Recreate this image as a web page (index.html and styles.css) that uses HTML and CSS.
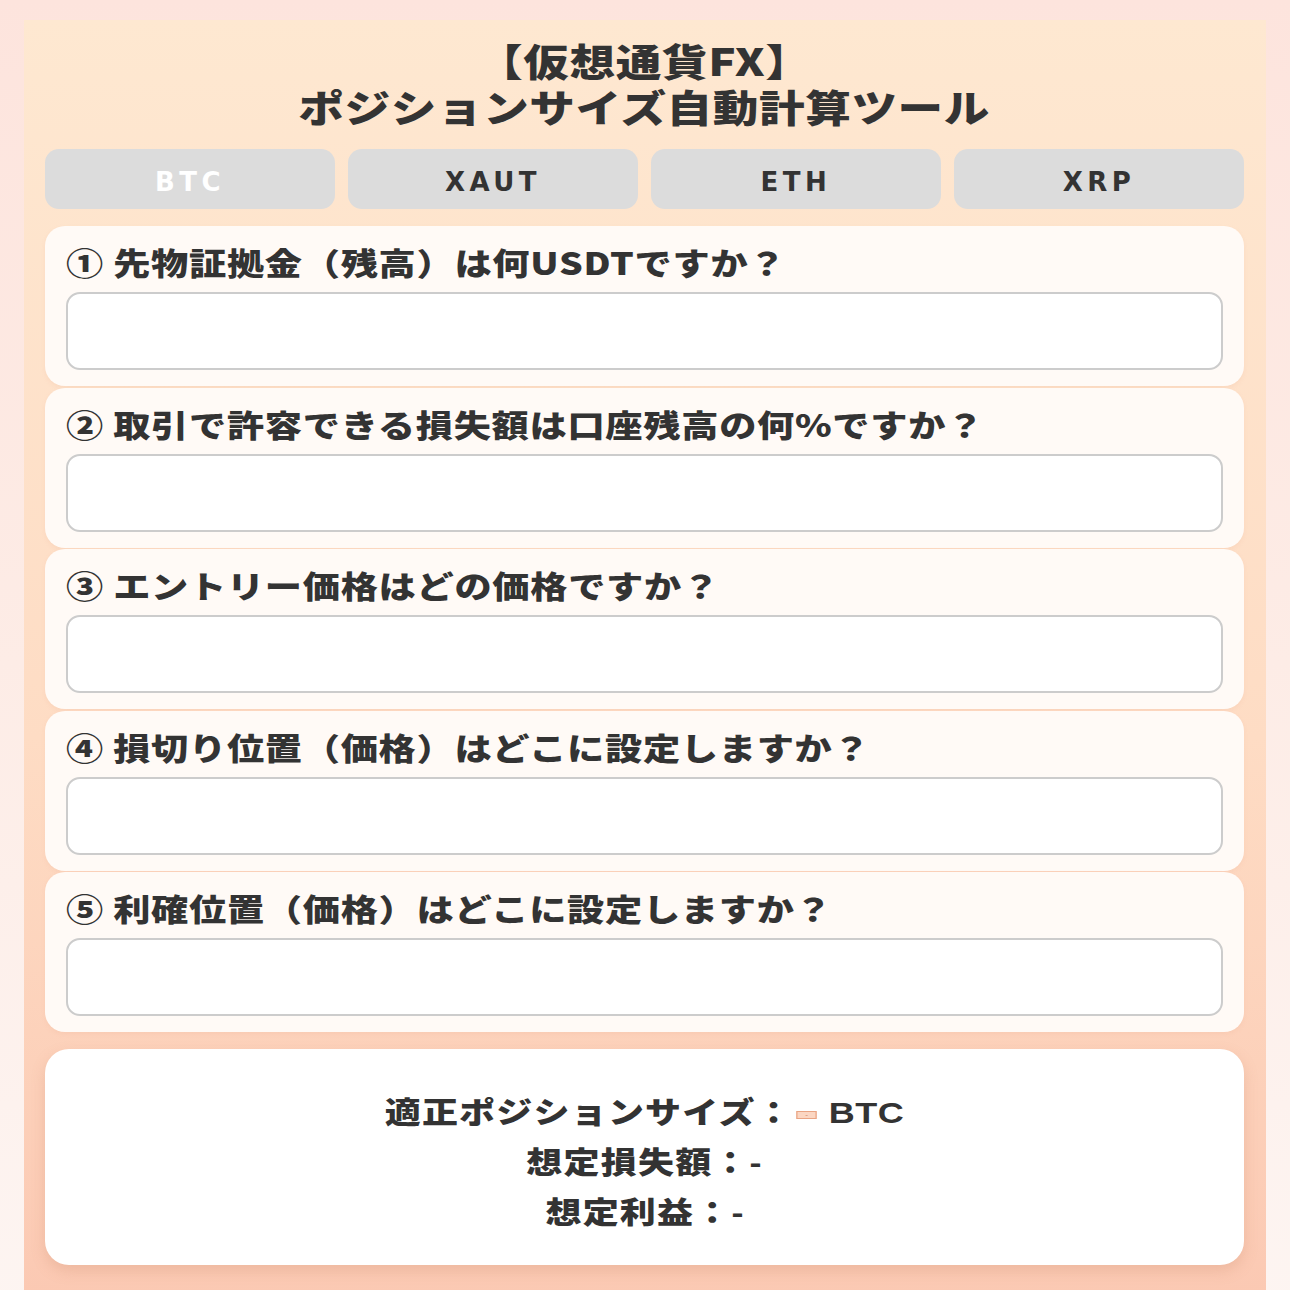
FILE: index.html
```html
<!DOCTYPE html>
<html lang="ja">
<head>
<meta charset="utf-8">
<title>ポジションサイズ自動計算ツール</title>
<link rel="stylesheet" href="styles.css">
</head>
<body>
<div class="app">
  <h1 class="title"><span class="title-line">【仮想通貨FX】</span><span class="title-line">ポジションサイズ自動計算ツール</span></h1>
  <div class="tabs">
    <button class="tab active">BTC</button>
    <button class="tab">XAUT</button>
    <button class="tab">ETH</button>
    <button class="tab">XRP</button>
  </div>
  <div class="questions">
    <div class="card">
      <label class="q">① 先物証拠金（残高）は何USDTですか？</label>
      <input class="field" type="text">
    </div>
    <div class="card">
      <label class="q">② 取引で許容できる損失額は口座残高の何%ですか？</label>
      <input class="field" type="text">
    </div>
    <div class="card">
      <label class="q">③ エントリー価格はどの価格ですか？</label>
      <input class="field" type="text">
    </div>
    <div class="card">
      <label class="q">④ 損切り位置（価格）はどこに設定しますか？</label>
      <input class="field" type="text">
    </div>
    <div class="card">
      <label class="q">⑤ 利確位置（価格）はどこに設定しますか？</label>
      <input class="field" type="text">
    </div>
  </div>
  <div class="result">
    <p class="line">適正ポジションサイズ：<span class="val">-</span> <span class="unit">BTC</span></p>
    <p class="line">想定損失額：<span class="unit">-</span></p>
    <p class="line">想定利益：<span class="unit">-</span></p>
  </div>
</div>
</body>
</html>
```
FILE: styles.css
```css
html, body {
  margin: 0;
  padding: 0;
}
body {
  background: linear-gradient(180deg, #fde4dd 0%, #fdece6 50%, #fdf5f2 100%);
  font-family: "Noto Sans CJK JP", "Noto Sans", sans-serif;
  color: #333;
  min-height: 1290px;
  overflow: hidden;
}
.app {
  width: 1242px;
  margin: 20px 0 0 24px;
  box-sizing: border-box;
  padding: 17px 22px 60px 21px;
  background: linear-gradient(180deg, #fee8d1 0%, #fedcc4 55%, #fbc8b2 100%);
  min-height: 1300px;
}
.title {
  margin: 0 0 20px;
  text-align: center;
  font-size: 38px;
  font-weight: 900;
  color: #333;
}
.title-line {
  display: block;
  width: max-content;
  margin: 0 auto;
  line-height: 46px;
  letter-spacing: 0.5px;
  transform: scaleX(1.2);
  transform-origin: center center;
}
.tabs {
  display: grid;
  grid-template-columns: repeat(4, 1fr);
  gap: 13px;
  margin-bottom: 17px;
}
.tab {
  height: 60px;
  border: none;
  border-radius: 14px;
  background: #dcdcdc;
  font-family: "DejaVu Sans", "Liberation Sans", sans-serif;
  font-weight: 700;
  font-size: 26px;
  letter-spacing: 4.5px;
  color: #333;
  padding: 5px 0 0;
}
.tab.active {
  color: #fff;
}
.questions {
  display: flex;
  flex-direction: column;
  gap: 1.5px;
}
.card {
  height: 160px;
  box-sizing: border-box;
  background: #fffaf6;
  border-radius: 20px;
  padding: 18px 21px 16px;
  display: flex;
  flex-direction: column;
  box-shadow: 0 2px 4px rgba(230, 170, 140, 0.15);
}
.q {
  display: block;
  width: max-content;
  font-size: 31px;
  line-height: 36px;
  font-weight: 900;
  letter-spacing: 0.6px;
  white-space: nowrap;
  margin-bottom: 12px;
  transform: scaleX(1.2);
  transform-origin: left center;
}
.field {
  height: 78px;
  box-sizing: border-box;
  border: 2px solid #cccccc;
  border-radius: 14px;
  background: #fff;
  width: 100%;
  font-size: 24px;
}
.result {
  margin-top: 17px;
  background: #fff;
  border-radius: 24px;
  padding: 36px 0 30px;
  text-align: center;
  box-shadow: 0 6px 14px rgba(200, 130, 100, 0.25);
}
.line {
  margin: 0 auto;
  width: max-content;
  height: 50px;
  font-size: 30px;
  line-height: 50px;
  font-weight: 900;
  letter-spacing: 1px;
  transform: scaleX(1.2);
  transform-origin: center center;
}
.unit {
  font-family: "Liberation Sans", "Noto Sans", sans-serif;
  font-weight: 700;
  letter-spacing: 0.5px;
  line-height: 50px;
}
.val {
  display: inline-block;
  width: 15px;
  height: 6px;
  line-height: 6px;
  background: #fbd6c2;
  border: 1px solid #e9a483;
  color: #d79a7c;
  font-size: 6px;
  letter-spacing: 0;
  text-align: center;
  vertical-align: middle;
  margin: 0 2px 0 3px;
}
```
